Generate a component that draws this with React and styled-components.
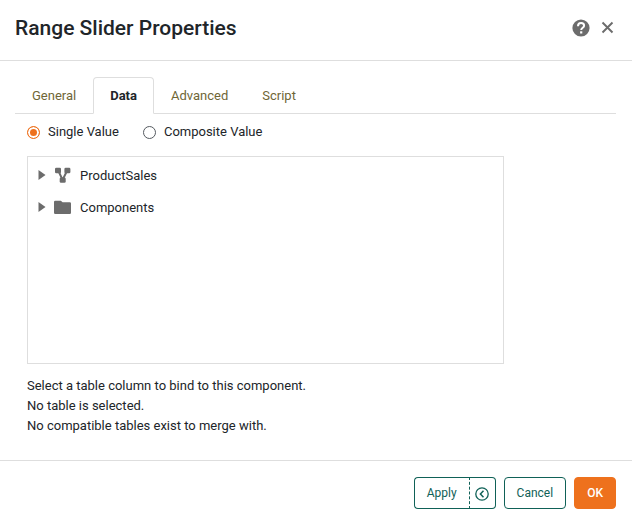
import React, { useState } from "react";
import styled, { createGlobalStyle } from "styled-components";

const GlobalStyle = createGlobalStyle`
  *, *::before, *::after { box-sizing: border-box; }
  body {
    margin: 0;
    background: #fff;
    color: #212529;
    font-family: Roboto, "Liberation Sans", sans-serif;
    font-size: 13px;
    line-height: 20px;
  }
  button, input { font: inherit; margin: 0; }
`;

const Dialog = styled.section`
  display: flex;
  flex-direction: column;
  background: #fff;
`;

const Header = styled.header`
  display: flex;
  align-items: center;
  justify-content: space-between;
  padding: 12px 16px 16px 15px;
  border-bottom: 1px solid #dedede;
`;

const Title = styled.h1`
  margin: 0;
  font-size: 21px;
  line-height: 32px;
  font-weight: 500;
`;

const HeaderActions = styled.div`
  display: flex;
  align-items: center;
  gap: 10px;
`;

const IconButton = styled.button`
  display: flex;
  padding: 0;
  border: 0;
  background: none;
  color: #6c6c6c;
  cursor: pointer;
`;

const Body = styled.main`
  padding: 16px 16px 24px 15px;
`;

const TabList = styled.div`
  display: flex;
  box-shadow: inset 0 -1px #dedede;
`;

const Tab = styled.button`
  padding: 8px 16px 7px;
  border: 1px solid ${(p) => (p.$active ? "#dedede" : "transparent")};
  border-bottom: 1px solid ${(p) => (p.$active ? "#fff" : "transparent")};
  border-radius: 4px 4px 0 0;
  background: ${(p) => (p.$active ? "#fff" : "transparent")};
  color: ${(p) => (p.$active ? "#212529" : "#6f6636")};
  font-weight: ${(p) => (p.$active ? 700 : 400)};
  cursor: pointer;
`;

const Panel = styled.div`
  padding: 8px 12px 0;
`;

const RadioRow = styled.div`
  display: flex;
  gap: 24px;
`;

const RadioLabel = styled.label`
  display: flex;
  align-items: center;
  gap: 8px;
`;

const Radio = styled.input`
  appearance: none;
  width: 13px;
  height: 13px;
  border: 1px solid #555a60;
  border-radius: 50%;
  background: #fff;

  &:checked {
    border-color: #ee711d;
    background: #ee711d;
    box-shadow: inset 0 0 0 2px #fff;
  }
`;

const Columns = styled.div`
  display: grid;
  grid-template-columns: minmax(0, 5fr) minmax(0, 1fr);
  column-gap: 5px;
  margin-top: 14px;
`;

const Tree = styled.ul`
  min-height: 208px;
  margin: 0;
  padding: 3px 10px;
  border: 1px solid #dedede;
  list-style: none;
`;

const TreeItem = styled.li`
  display: flex;
  align-items: center;
  height: 32px;
`;

const Expander = styled(IconButton)`
  margin-right: 8px;
`;

const NodeIcon = styled.span`
  display: flex;
  margin-right: 8px;
  color: #6c6c6c;
`;

const Notes = styled.div`
  margin-top: 12px;
`;

const Note = styled.p`
  margin: 0;
`;

const Footer = styled.footer`
  display: flex;
  justify-content: flex-end;
  gap: 8px;
  padding: 16px 16px 11px;
  border-top: 1px solid #dedede;
`;

const Button = styled.button`
  height: 32px;
  padding: 0 12px;
  border: 1px solid ${(p) => (p.$primary ? "#ee711d" : "#0f6157")};
  border-radius: 4px;
  background: ${(p) => (p.$primary ? "#ee711d" : "#fff")};
  color: ${(p) => (p.$primary ? "#fff" : "#0f6157")};
  font-size: 12px;
  font-weight: ${(p) => (p.$primary ? 500 : 400)};
  cursor: pointer;
`;

const ButtonGroup = styled.div`
  display: flex;
`;

const SplitMain = styled(Button)`
  border-right: 0;
  border-radius: 4px 0 0 4px;
`;

const SplitToggle = styled(Button)`
  display: flex;
  align-items: center;
  padding: 2px 6px 0 5px;
  border-left-style: dashed;
  border-radius: 0 4px 4px 0;
`;

const HelpIcon = () => (
  <svg width="18" height="18" viewBox="0 0 18 18" aria-hidden="true">
    <circle cx="9" cy="9" r="8.6" fill="currentColor" />
    <path d="M6 7.2C6 5.2 7.3 4 9.1 4s3 1.1 3 2.7c0 2-2.9 2.1-2.9 4.3" fill="none" stroke="#fff" strokeWidth="2" />
    <rect x="8.1" y="12.3" width="2.2" height="2.2" fill="#fff" />
  </svg>
);

const CloseIcon = () => (
  <svg width="16" height="16" viewBox="0 0 16 16" aria-hidden="true">
    <path d="M2.5 2.5l10 10M12.5 2.5l-10 10" stroke="currentColor" strokeWidth="1.9" />
  </svg>
);

const ArrowIcon = () => (
  <svg width="8" height="12" viewBox="0 0 8 12" aria-hidden="true">
    <path d="M.5 0v10l7-5z" fill="currentColor" />
  </svg>
);

const ModelIcon = () => (
  <svg width="18" height="18" viewBox="0 0 18 18" aria-hidden="true">
    <path d="M4 3l4.6 10L13.4 3" fill="none" stroke="currentColor" strokeWidth="2" />
    <rect x="1" y=".8" width="6" height="5.4" rx="1.3" fill="currentColor" />
    <rect x="10.4" y=".8" width="6" height="5.4" rx="1.3" fill="currentColor" />
    <rect x="5.7" y="10.4" width="6" height="5.4" rx="1.3" fill="currentColor" />
  </svg>
);

const FolderIcon = () => (
  <svg width="18" height="18" viewBox="0 0 18 18" aria-hidden="true">
    <path d="M0 2.9q0-1.2 1.2-1.2h5.6l1.8 1.6h7.2q1.2 0 1.2 1.2v9.2q0 1.2-1.2 1.2H1.2q-1.2 0-1.2-1.2z" fill="currentColor" />
  </svg>
);

const BackCircleIcon = () => (
  <svg width="14" height="14" viewBox="0 0 14 14" fill="none" stroke="currentColor" aria-hidden="true">
    <circle cx="7" cy="7" r="6.2" strokeWidth="1.3" />
    <path d="M8.5 3.8L5.4 7l3.1 3.2" strokeWidth="1.5" />
  </svg>
);

const TABS = ["General", "Data", "Advanced", "Script"];
const MODES = ["Single Value", "Composite Value"];
const NODES = [
  { label: "ProductSales", Icon: ModelIcon },
  { label: "Components", Icon: FolderIcon },
];
const NOTES = [
  "Select a table column to bind to this component.",
  "No table is selected.",
  "No compatible tables exist to merge with.",
];

export default function App() {
  const [tab, setTab] = useState("Data");
  const [mode, setMode] = useState("Single Value");

  return (
    <>
      <GlobalStyle />
      <Dialog role="dialog" aria-labelledby="dialog-title">
        <Header>
          <Title id="dialog-title">Range Slider Properties</Title>
          <HeaderActions>
            <IconButton type="button" aria-label="Help"><HelpIcon /></IconButton>
            <IconButton type="button" aria-label="Close"><CloseIcon /></IconButton>
          </HeaderActions>
        </Header>
        <Body>
          <TabList role="tablist">
            {TABS.map((name) => (
              <Tab
                key={name}
                type="button"
                role="tab"
                aria-selected={tab === name}
                $active={tab === name}
                onClick={() => setTab(name)}
              >
                {name}
              </Tab>
            ))}
          </TabList>
          <Panel role="tabpanel" aria-label={tab}>
            <RadioRow role="radiogroup" aria-label="Value type">
              {MODES.map((name) => (
                <RadioLabel key={name}>
                  <Radio type="radio" name="mode" checked={mode === name} onChange={() => setMode(name)} />
                  {name}
                </RadioLabel>
              ))}
            </RadioRow>
            <Columns>
              <Tree>
                {NODES.map(({ label, Icon }) => (
                  <TreeItem key={label}>
                    <Expander type="button" aria-label={`Expand ${label}`}><ArrowIcon /></Expander>
                    <NodeIcon><Icon /></NodeIcon>
                    {label}
                  </TreeItem>
                ))}
              </Tree>
            </Columns>
            <Notes>
              {NOTES.map((text) => <Note key={text}>{text}</Note>)}
            </Notes>
          </Panel>
        </Body>
        <Footer>
          <ButtonGroup>
            <SplitMain type="button">Apply</SplitMain>
            <SplitToggle type="button" aria-label="Collapse apply options"><BackCircleIcon /></SplitToggle>
          </ButtonGroup>
          <Button type="button">Cancel</Button>
          <Button type="button" $primary>OK</Button>
        </Footer>
      </Dialog>
    </>
  );
}
